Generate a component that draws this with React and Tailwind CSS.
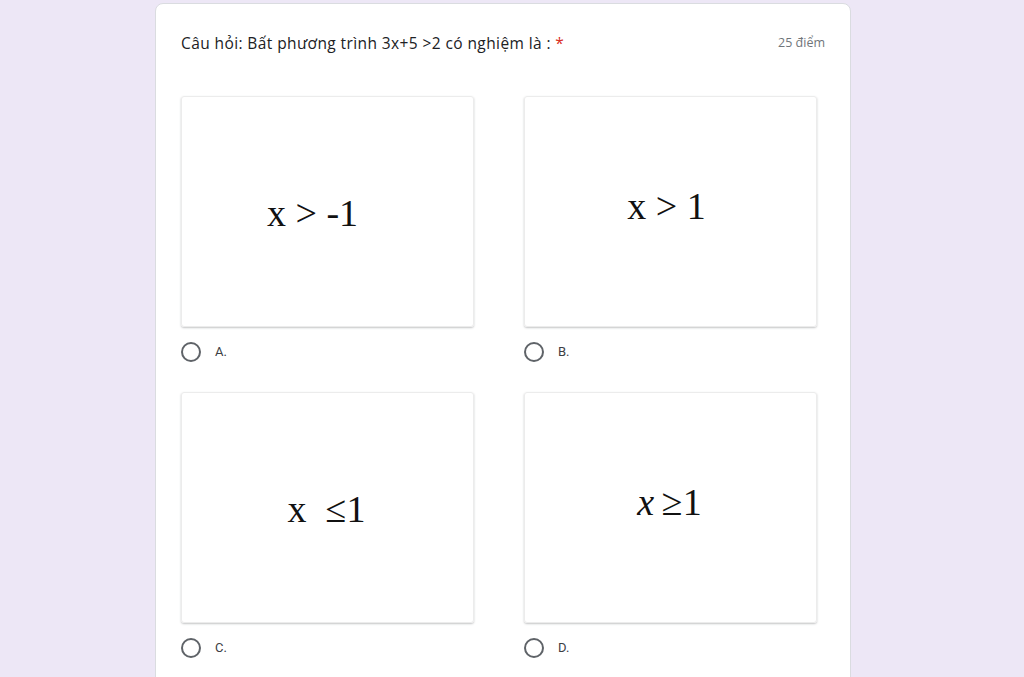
import { useState } from 'react';

const options = [
  { id: 'A', math: <>x &gt; -1</>, offset: 'pr-[30px] pt-[2px]' },
  { id: 'B', math: <>x &gt; 1</>, offset: 'pr-[8px] pb-[12px]' },
  { id: 'C', math: <>x&nbsp; ≤1</>, offset: 'pr-[2px] pt-[2px]' },
  { id: 'D', math: <><span className="italic">x</span>&thinsp;≥1</>, offset: 'pr-[2px] pb-[12px]' },
];

const App = () => {
  const [picked, setPicked] = useState(null);

  return (
    <div className="min-h-[677px] w-full bg-[#ede7f6] pl-[155px] pt-[3px] overflow-hidden" style={{ fontFamily: '"Open Sans", Roboto, sans-serif' }}>
      <div className="w-[696px] min-h-[700px] bg-white rounded-lg border border-[#dadce0] px-[25px] pt-[29px]">
        <div className="flex items-start justify-between">
          <h2 className="text-[15.5px] leading-5 tracking-[0.4px] text-[#202124]">
            Câu hỏi: Bất phương trình 3x+5 &gt;2 có nghiệm là : <span className="text-[#d93025]">*</span>
          </h2>
          <span className="text-[12.5px] leading-5 text-[#70757a]">25 điểm</span>
        </div>

        <div className="mt-[43px] grid grid-cols-[293px_293px] gap-x-[50px] gap-y-[30px]">
          {options.map((o) => (
            <div key={o.id}>
              <div className={`h-[231px] rounded-[3px] border border-[#ececec] shadow-[0_1px_2px_rgba(60,64,67,0.3)] flex items-center justify-center ${o.offset}`}>
                <span className="text-[38px] leading-none text-[#111]" style={{ fontFamily: '"Liberation Serif", "Times New Roman", serif' }}>
                  {o.math}
                </span>
              </div>
              <label className="mt-[15px] flex items-center gap-[14px] cursor-pointer" onClick={() => setPicked(o.id)}>
                <span className="w-5 h-5 rounded-full border-2 border-[#5f6368] flex items-center justify-center">
                  {picked === o.id && <span className="w-2.5 h-2.5 rounded-full bg-[#673ab7]" />}
                </span>
                <span className="text-[13px] text-[#3c4043]" style={{ fontFamily: 'Roboto, sans-serif' }}>{o.id}.</span>
              </label>
            </div>
          ))}
        </div>
      </div>
    </div>
  );
};

export default App;
